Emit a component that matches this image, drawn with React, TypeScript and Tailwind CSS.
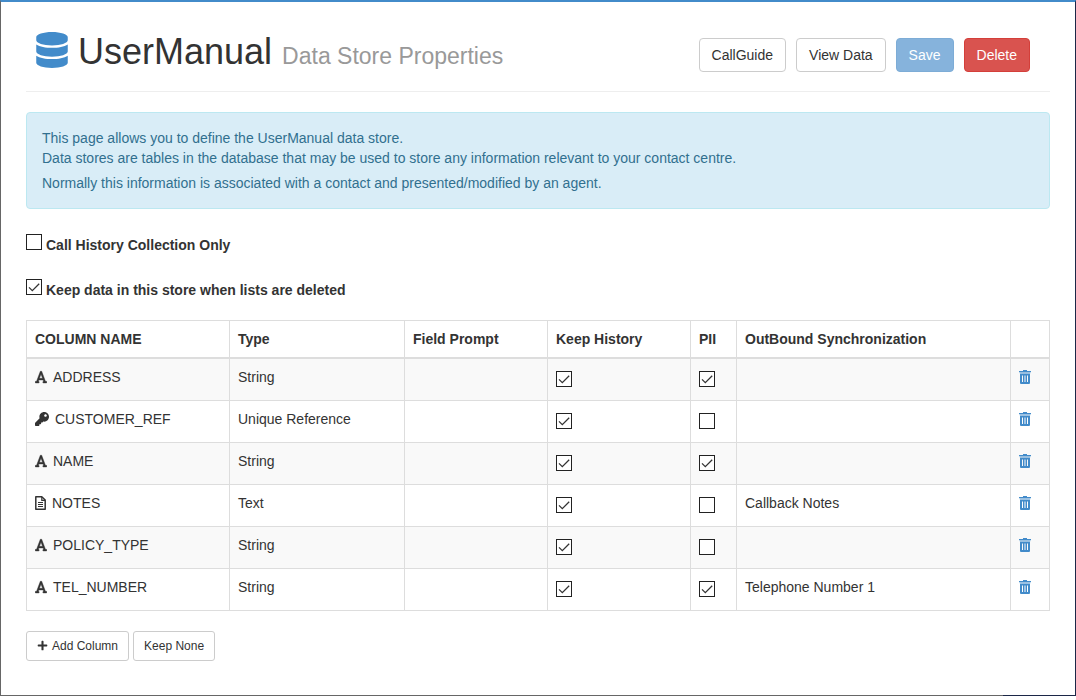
import { useState } from "react";
import { FaDatabase, FaKey, FaPlus } from "react-icons/fa";
import { FaFont } from "react-icons/fa6";

interface Column {
  name: string;
  type: string;
  prompt: string;
  keepHistory: boolean;
  pii: boolean;
  outbound: string;
}

const initialColumns: Column[] = [
  { name: "ADDRESS", type: "String", prompt: "", keepHistory: true, pii: true, outbound: "" },
  { name: "CUSTOMER_REF", type: "Unique Reference", prompt: "", keepHistory: true, pii: false, outbound: "" },
  { name: "NAME", type: "String", prompt: "", keepHistory: true, pii: true, outbound: "" },
  { name: "NOTES", type: "Text", prompt: "", keepHistory: true, pii: false, outbound: "Callback Notes" },
  { name: "POLICY_TYPE", type: "String", prompt: "", keepHistory: true, pii: false, outbound: "" },
  { name: "TEL_NUMBER", type: "String", prompt: "", keepHistory: true, pii: true, outbound: "Telephone Number 1" },
];

interface CheckBoxProps {
  id?: string;
  label?: string;
  checked: boolean;
  onChange: () => void;
}

const CheckBox = ({ id, label, checked, onChange }: CheckBoxProps) => (
  <span className="inline-grid size-4 shrink-0 place-items-center">
    <input
      id={id}
      type="checkbox"
      aria-label={label}
      checked={checked}
      onChange={onChange}
      className="col-start-1 row-start-1 size-4 appearance-none border border-[#222] bg-white"
    />
    {checked && (
      <svg
        viewBox="0 0 16 16"
        className="pointer-events-none col-start-1 row-start-1 size-4"
        fill="none"
        stroke="#333"
        strokeWidth="1.3"
      >
        <path d="M3 8.4 6.3 11.6 13.2 4.8" />
      </svg>
    )}
  </span>
);

const TypeIcon = ({ type }: { type: string }) => {
  if (type === "Unique Reference") return <FaKey className="size-3.5 shrink-0" />;
  if (type === "Text") {
    return (
      <svg viewBox="0 0 11 14" className="h-3.5 w-[11px] shrink-0" fill="none" stroke="currentColor">
        <path d="M.8.8h6L10.2 4v9.2H.8z" strokeWidth="1.5" strokeLinejoin="round" />
        <path d="M6.8 1v3.3H10" strokeWidth="1.2" />
        <path d="M3 6.5h5M3 8.5h5M3 10.5h5" />
      </svg>
    );
  }
  return <FaFont className="h-3.5 w-3 shrink-0" stroke="currentColor" strokeWidth="14" />;
};

const TrashIcon = () => (
  <svg viewBox="0 0 12 14" className="h-3.5 w-3" fill="currentColor">
    <path d="M4 0h4v1H4zM0 1h12v1.2H0z" />
    <path d="M.8 2.2h10.4v1.6H.8z" opacity=".45" />
    <path
      fillRule="evenodd"
      d="M1 3.8h10V13a1 1 0 0 1-1 1H2a1 1 0 0 1-1-1zM3 5.5V12h1V5.5zM5.5 5.5V12h1V5.5zM8 5.5V12h1V5.5z"
    />
  </svg>
);

const App = () => {
  const [columns, setColumns] = useState(initialColumns);
  const [historyOnly, setHistoryOnly] = useState(false);
  const [keepData, setKeepData] = useState(true);

  const toggle = (name: string, key: "keepHistory" | "pii") => {
    setColumns(columns.map((c) => (c.name === name ? { ...c, [key]: !c[key] } : c)));
  };

  const keepNone = () => {
    setColumns(columns.map((c) => ({ ...c, keepHistory: false })));
  };

  const button = "rounded border px-3 py-1.5 text-sm";
  const smallButton = "flex items-center rounded-[3px] border border-[#ccc] bg-white px-2.5 py-[5px] text-xs leading-[18px]";

  return (
    <div className="font-['Liberation_Sans',Arial,sans-serif] text-sm text-[#333]">
      <main className="border-x border-t-2 border-t-[#428bca] border-r-[#1c2747] border-l-[#666] bg-white px-[25px] pb-[34px]">
        <header className="flex items-end justify-between border-b border-[#eee] pt-[30px] pb-[19px] pr-5 pl-2.5">
          <h1 className="flex items-start text-4xl leading-10">
            <FaDatabase className="mr-2.5 h-9 w-8 text-[#428bca]" />
            <span>
              UserManual <small className="text-[23px] leading-none text-[#999]">Data Store Properties</small>
            </span>
          </h1>
          <div className="flex gap-2.5">
            <button type="button" className={`${button} border-[#ccc] bg-white`}>CallGuide</button>
            <button type="button" className={`${button} border-[#ccc] bg-white`}>View Data</button>
            <button type="button" disabled className={`${button} border-[#7dacd6] bg-[#86b3dc] text-white`}>
              Save
            </button>
            <button type="button" className={`${button} border-[#d43f3a] bg-[#d9534f] text-white`}>Delete</button>
          </div>
        </header>

        <section className="mt-5 rounded border border-[#bce8f1] bg-[#d9edf7] p-[15px] text-[#31708f]">
          <p>
            This page allows you to define the UserManual data store.
            <br />
            Data stores are tables in the database that may be used to store any information relevant to your contact
            centre.
          </p>
          <p className="mt-[5px]">
            Normally this information is associated with a contact and presented/modified by an agent.
          </p>
        </section>

        <div className="mt-[25px] flex gap-1">
          <CheckBox id="historyOnly" checked={historyOnly} onChange={() => setHistoryOnly(!historyOnly)} />
          <label htmlFor="historyOnly" className="pt-px font-bold">Call History Collection Only</label>
        </div>
        <div className="mt-6 flex gap-1">
          <CheckBox id="keepData" checked={keepData} onChange={() => setKeepData(!keepData)} />
          <label htmlFor="keepData" className="pt-px font-bold">Keep data in this store when lists are deleted</label>
        </div>

        <table className="mt-5 w-full table-fixed border-collapse [&_td]:border [&_td]:border-[#ddd] [&_td]:p-2 [&_td]:align-top [&_th]:border [&_th]:border-b-2 [&_th]:border-[#ddd] [&_th]:p-2 [&_th]:text-left">
          <colgroup>
            <col className="w-[203px]" />
            <col className="w-[175px]" />
            <col className="w-[143px]" />
            <col className="w-[143px]" />
            <col className="w-[46px]" />
            <col />
            <col className="w-[39px]" />
          </colgroup>
          <thead>
            <tr>
              <th>COLUMN NAME</th>
              <th>Type</th>
              <th>Field Prompt</th>
              <th>Keep History</th>
              <th>PII</th>
              <th>OutBound Synchronization</th>
              <th></th>
            </tr>
          </thead>
          <tbody>
            {columns.map((col) => (
              <tr key={col.name} className="h-[42px] odd:bg-[#f9f9f9]">
                <td>
                  <div className="flex items-center gap-1.5">
                    <TypeIcon type={col.type} />
                    {col.name}
                  </div>
                </td>
                <td>{col.type}</td>
                <td>{col.prompt}</td>
                <td>
                  <div className="flex pt-1">
                    <CheckBox
                      label={`Keep history for ${col.name}`}
                      checked={col.keepHistory}
                      onChange={() => toggle(col.name, "keepHistory")}
                    />
                  </div>
                </td>
                <td>
                  <div className="flex pt-1">
                    <CheckBox
                      label={`${col.name} is PII`}
                      checked={col.pii}
                      onChange={() => toggle(col.name, "pii")}
                    />
                  </div>
                </td>
                <td>{col.outbound}</td>
                <td>
                  <button
                    type="button"
                    aria-label={`Delete ${col.name}`}
                    className="flex h-5 items-center text-[#428bca]"
                    onClick={() => setColumns(columns.filter((c) => c.name !== col.name))}
                  >
                    <TrashIcon />
                  </button>
                </td>
              </tr>
            ))}
          </tbody>
        </table>

        <div className="mt-5 flex gap-1">
          <button type="button" className={smallButton}>
            <FaPlus className="mr-1 size-[11px]" />
            Add Column
          </button>
          <button type="button" className={smallButton} onClick={keepNone}>Keep None</button>
        </div>
      </main>
      <div className="flex h-px bg-[#666]">
        <div className="ml-auto w-[73px] bg-[#1c2747]"></div>
      </div>
    </div>
  );
};

export default App;
